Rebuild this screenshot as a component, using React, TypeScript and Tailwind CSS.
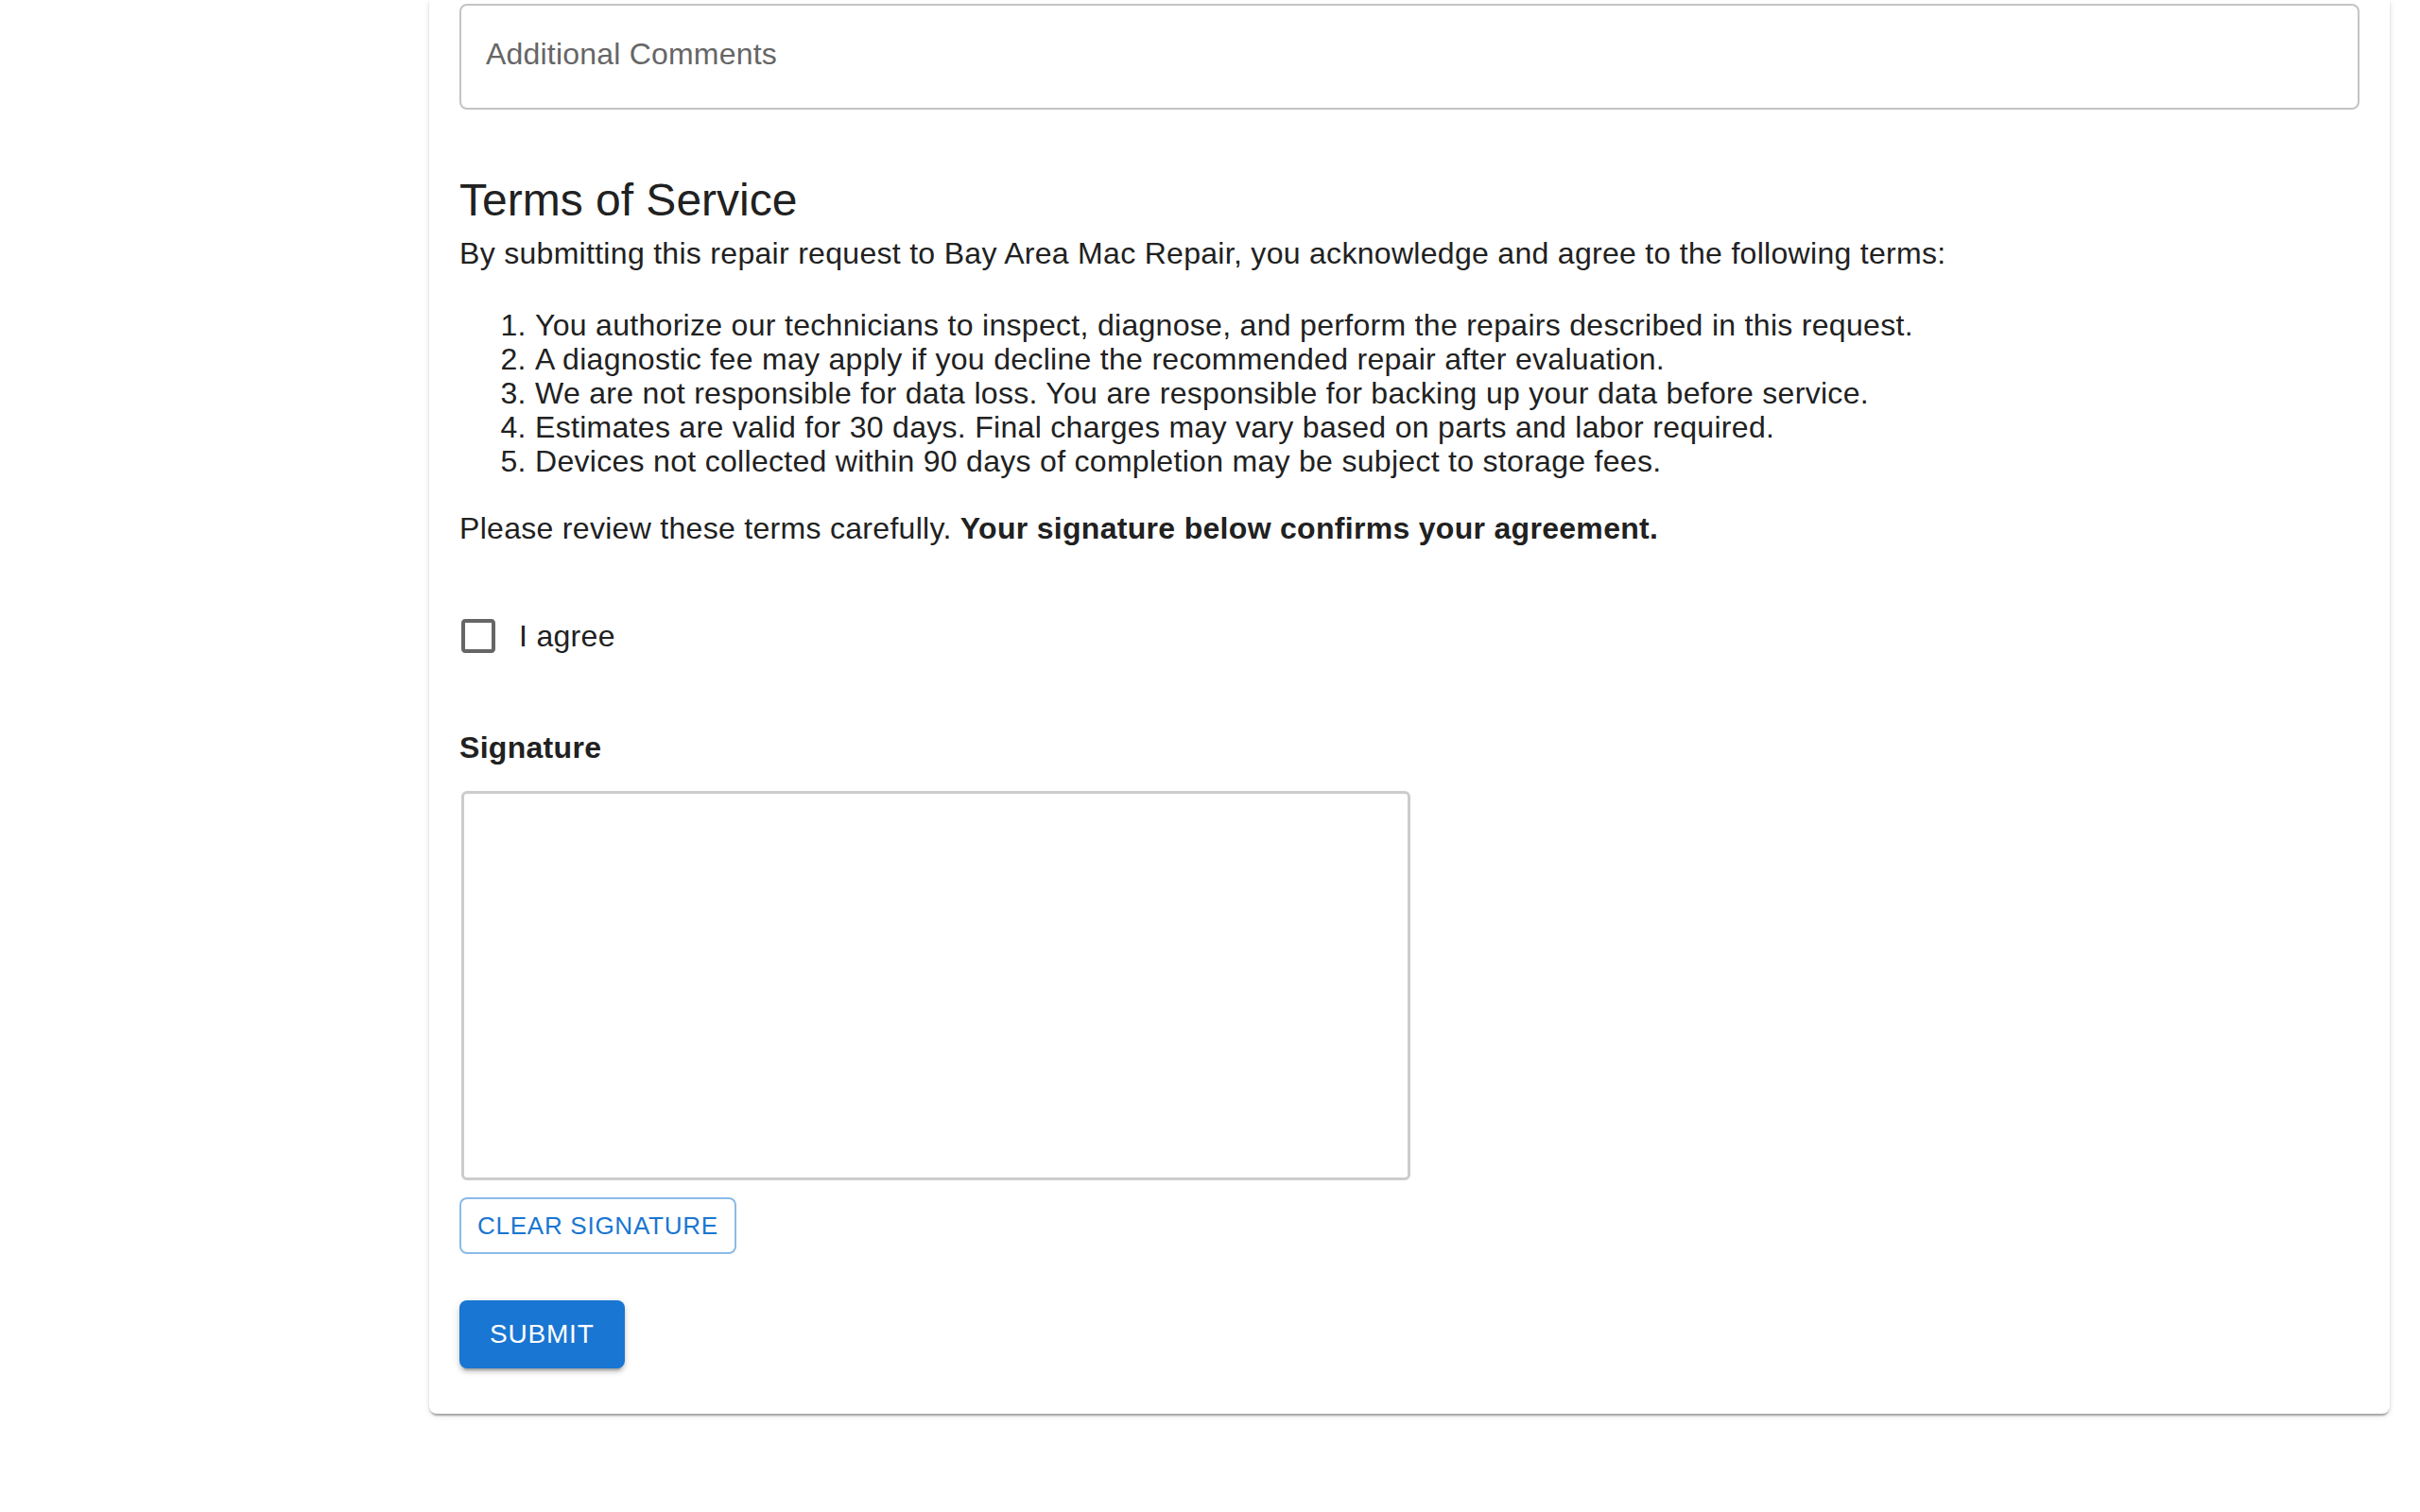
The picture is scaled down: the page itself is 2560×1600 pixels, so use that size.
const terms = [
  "You authorize our technicians to inspect, diagnose, and perform the repairs described in this request.",
  "A diagnostic fee may apply if you decline the recommended repair after evaluation.",
  "We are not responsible for data loss. You are responsible for backing up your data before service.",
  "Estimates are valid for 30 days. Final charges may vary based on parts and labor required.",
  "Devices not collected within 90 days of completion may be subject to storage fees.",
];

const App = () => {
  return (
    <div className="min-h-[1600px] bg-white pl-[454px] pr-[32px] font-['Liberation_Sans',Arial,sans-serif] text-[#212121]">
      <div className="flex flex-col items-start rounded-b-[8px] bg-white px-[32px] pt-[4px] pb-[48px] shadow-[0_4px_2px_-2px_rgba(0,0,0,0.2),0_2px_2px_0_rgba(0,0,0,0.14),0_2px_6px_0_rgba(0,0,0,0.12)]">
        <div className="flex h-[112px] w-full items-center rounded-[8px] border-2 border-[#c4c4c4] px-[26px] pb-[6px] text-[32px] tracking-[0.2px] text-[#666]">
          Additional Comments
        </div>

        <h2 className="mt-[64px] text-[48px] leading-[64px] font-normal">Terms of Service</h2>
        <p className="mt-[4px] text-[32px] leading-[40px] tracking-[0.3px]">
          By submitting this repair request to Bay Area Mac Repair, you acknowledge and agree to the following terms:
        </p>
        <ol className="mt-[38px] list-decimal pl-[80px] text-[32px] leading-[36px] tracking-[0.3px]">
          {terms.map((t) => (
            <li key={t}>{t}</li>
          ))}
        </ol>
        <p className="mt-[33px] text-[32px] leading-[40px] tracking-[0.3px]">
          Please review these terms carefully. <b>Your signature below confirms your agreement.</b>
        </p>

        <label className="mt-[70px] flex h-[48px] items-center gap-[19px] text-[32px] leading-[40px] tracking-[0.3px]">
          <svg viewBox="0 0 24 24" className="ml-[-4px] h-[48px] w-[48px] fill-[#666]">
            <path d="M19 5v14H5V5h14m0-2H5c-1.11 0-2 .9-2 2v14c0 1.1.89 2 2 2h14c1.1 0 2-.9 2-2V5c0-1.1-.9-2-2-2z" />
          </svg>
          <span>I agree</span>
        </label>

        <div className="mt-[74px] text-[32px] leading-[40px] font-bold tracking-[0.3px]">Signature</div>
        <div className="mt-[26px] ml-[2px] h-[412px] w-[1004px] rounded-[6px] border-[3px] border-[#cccccc]" />

        <button className="mt-[18px] h-[60px] rounded-[8px] border-2 border-[#8cbae8] px-[17px] text-[26px] tracking-[0.74px] text-[#1976d2] uppercase">
          Clear Signature
        </button>

        <button className="mt-[49px] h-[72px] rounded-[8px] bg-[#1976d2] px-[32px] text-[28px] tracking-[0.8px] text-white uppercase shadow-[0_6px_2px_-4px_rgba(0,0,0,0.2),0_4px_4px_0_rgba(0,0,0,0.14),0_2px_10px_0_rgba(0,0,0,0.12)]">
          Submit
        </button>
      </div>
    </div>
  );
};

export default App;
